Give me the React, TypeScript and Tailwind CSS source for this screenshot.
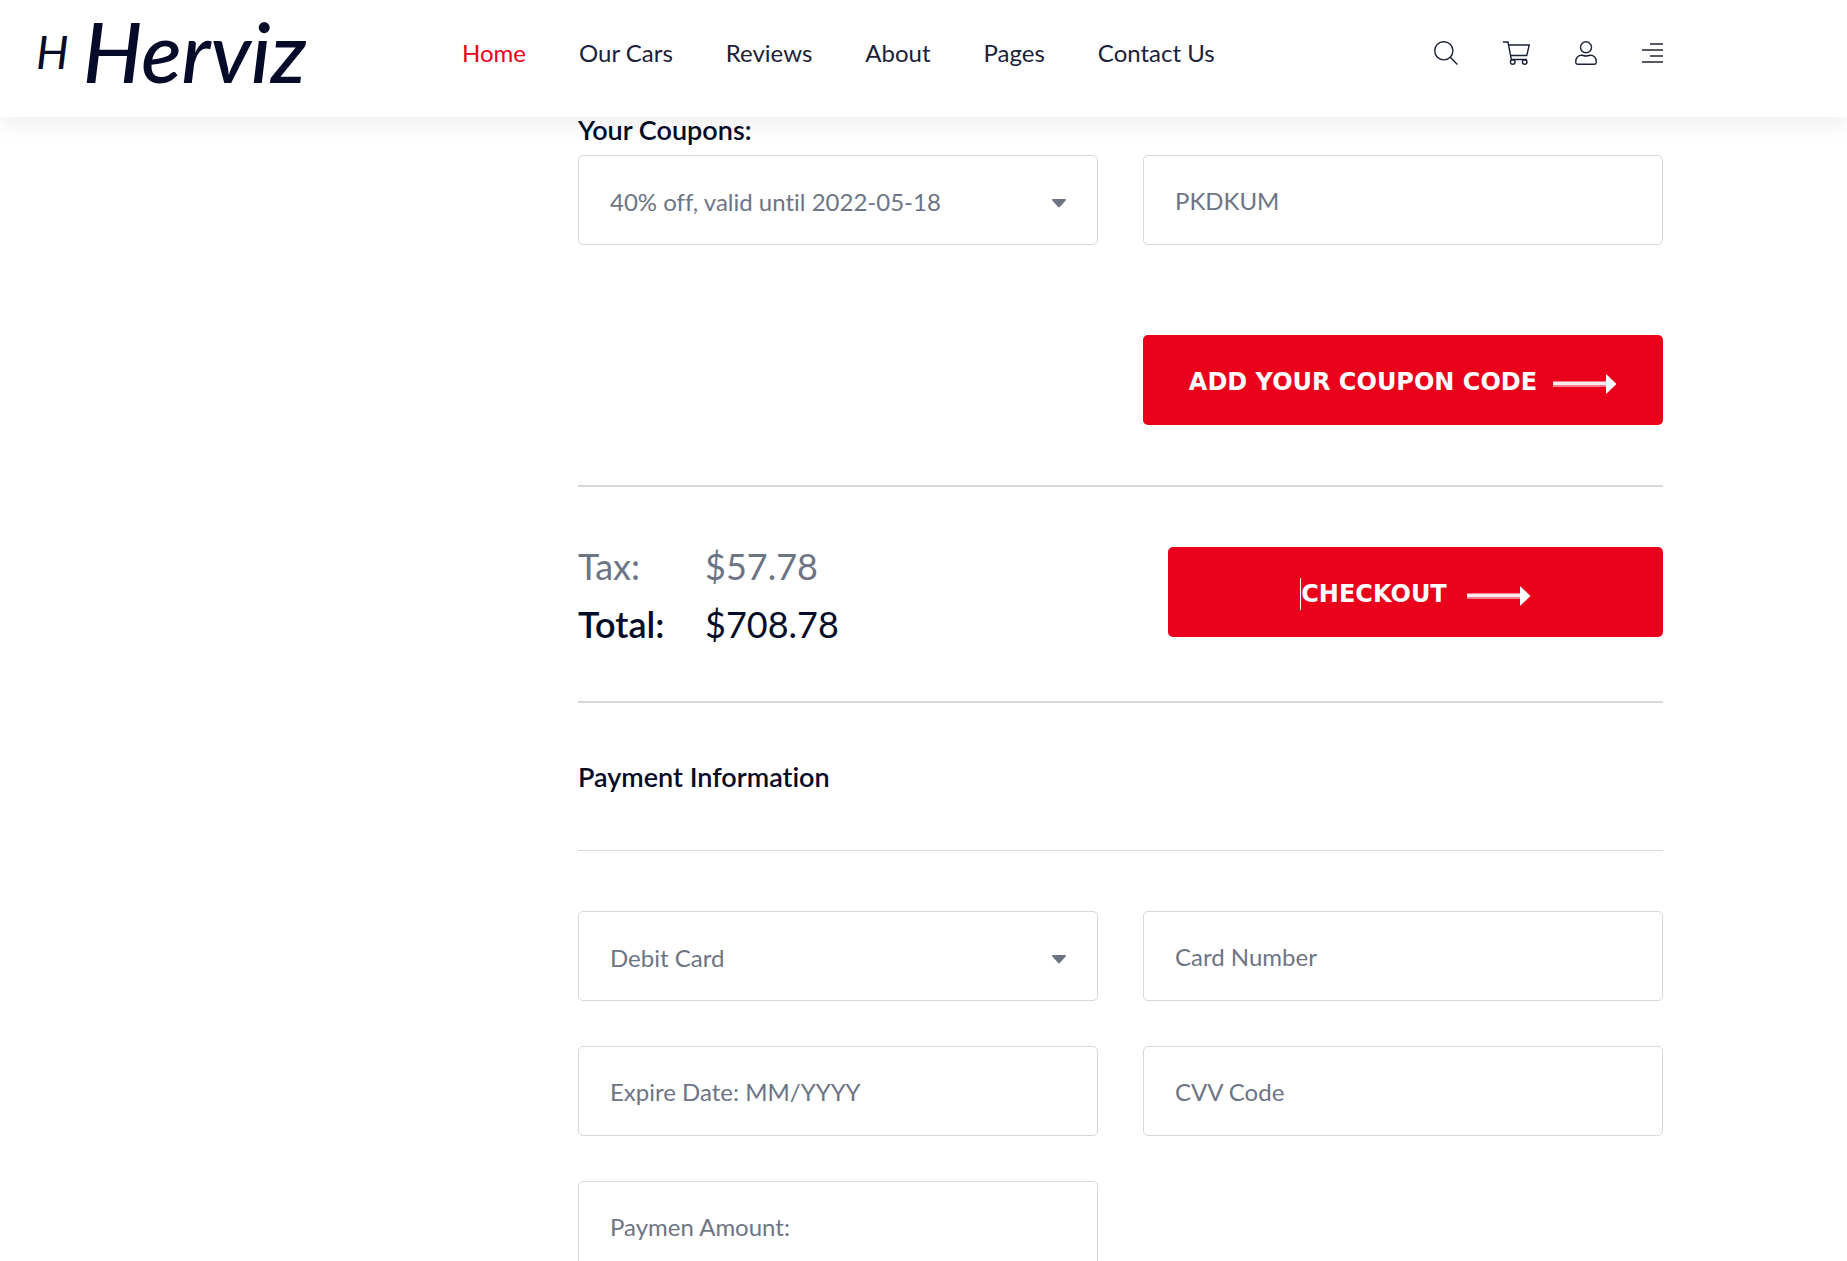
import type { ReactNode } from "react";

const NAV = ["Home", "Our Cars", "Reviews", "About", "Pages", "Contact Us"];

const FIELD =
  "block h-[90px] w-full rounded-[5px] border border-[#d8d8d8] bg-white px-[31px] text-2xl text-[#6d7585] outline-none placeholder:text-[#6d7585] placeholder:opacity-100";

function IconButton({ label, children }: { label: string; children: ReactNode }) {
  return (
    <button type="button" aria-label={label} className="flex items-center">
      {children}
    </button>
  );
}

function Icons() {
  return (
    <div className="flex items-center gap-[45px] text-[#1b2238]">
      <IconButton label="Search">
        <svg width="24" height="24" viewBox="0 0 24 24" fill="none" stroke="currentColor" strokeWidth="1.4">
          <circle cx="9.8" cy="9.8" r="9.1" />
          <path d="M16.3 16.3L23.4 23.4" />
        </svg>
      </IconButton>
      <IconButton label="Cart">
        <svg width="27" height="24" viewBox="0 0 27 24" fill="none" stroke="currentColor" strokeWidth="1.4">
          <path d="M0 1H5L8.3 18.5H24" />
          <path d="M5.6 4H26.2L23.8 14.5H7.6" />
          <circle cx="9.7" cy="21" r="2.3" />
          <circle cx="21.7" cy="21" r="2.3" />
        </svg>
      </IconButton>
      <IconButton label="Account">
        <svg width="22" height="24" viewBox="0 0 22 24" fill="none" stroke="currentColor" strokeWidth="1.4">
          <circle cx="11" cy="6.3" r="5.5" />
          <path d="M6.6 14.2C8 14.2 8.8 15 11 15C13.2 15 14 14.2 15.4 14.2C18.8 14.2 21.2 16.8 21.2 20V21.6C21.2 22.6 20.5 23.3 19.5 23.3H2.5C1.5 23.3 0.8 22.6 0.8 21.6V20C0.8 16.8 3.2 14.2 6.6 14.2Z" />
        </svg>
      </IconButton>
      <IconButton label="Menu">
        <svg width="21" height="24" viewBox="0 0 21 24" fill="none" stroke="#5b5868" strokeWidth="2">
          <path d="M8 3H21M0 9H21M8 15H21M0 21H21" />
        </svg>
      </IconButton>
    </div>
  );
}

function Arrow() {
  return (
    <svg width="64" height="24" viewBox="0 0 64 24" aria-hidden="true">
      <rect x="0" y="11" width="54" height="6" fill="#fff" opacity="0.5" />
      <rect x="0" y="12" width="54" height="3" fill="#fff" opacity="0.85" />
      <path d="M53 4L63.5 14L53 24Z" fill="#fff" />
    </svg>
  );
}

function SelectField({ label, value }: { label: string; value: string }) {
  return (
    <div className="relative">
      <select aria-label={label} className={`${FIELD} appearance-none pt-1`}>
        <option>{value}</option>
      </select>
      <svg className="pointer-events-none absolute top-11 right-8" width="14" height="9" viewBox="0 0 14 9" aria-hidden="true">
        <path d="M0.8 0H13.2C14 0 14.2 0.8 13.7 1.4L7.8 8C7.3 8.6 6.7 8.6 6.2 8L0.3 1.4C-0.2 0.8 0 0 0.8 0Z" fill="#6d7585" />
      </svg>
    </div>
  );
}

function TextField({ label }: { label: string }) {
  return <input type="text" aria-label={label} placeholder={label} className={FIELD} />;
}

const BUTTON =
  "flex h-[90px] items-center justify-center rounded-[5px] bg-[#eb001b] pt-1 font-['DejaVu_Sans',sans-serif] text-2xl font-bold whitespace-nowrap text-white";

export default function App() {
  return (
    <div className="h-screen overflow-hidden bg-white font-[Lato,sans-serif] text-[#030c26] [font-variant-ligatures:none]">
      <header className="relative z-10 flex h-[117px] items-start bg-white pr-[184px] pl-9 shadow-[0_10px_20px_rgba(0,0,0,0.06)]">
        <a href="#" aria-label="Herviz" className="flex h-[102px] w-[426px] items-center gap-3.5 text-[#060b29] italic">
          <span className="text-[46px]">H</span>
          <span className="text-[84px] leading-[102px] font-medium">Herviz</span>
        </a>
        <nav className="flex h-[106px] flex-1 items-center gap-[53px] text-2xl whitespace-nowrap text-[#1b2238]">
          {NAV.map((item) => (
            <a key={item} href="#" className={item === "Home" ? "text-[#eb001b]" : ""}>
              {item}
            </a>
          ))}
        </nav>
        <div className="flex h-[106px] items-center">
          <Icons />
        </div>
      </header>

      <main className="pr-[184px] pl-[578px]">
        <h2 className="mb-3 text-[27px] leading-[26px] font-semibold">Your Coupons:</h2>
        <div className="grid grid-cols-2 gap-x-[45px]">
          <SelectField label="Your coupons" value="40% off, valid until 2022-05-18" />
          <TextField label="PKDKUM" />
          <button type="button" className={`${BUTTON} col-start-2 mt-[90px] gap-4`}>
            ADD YOUR COUPON CODE
            <Arrow />
          </button>
        </div>

        <hr className="mt-[60px] border-t-2 border-[#d8d8d8]" />

        <section className="flex items-center justify-between pt-11 pb-12">
          <dl className="grid grid-cols-[127px_auto] pt-1.5 text-4xl leading-[58px]">
            <dt className="text-[#6d7585]">Tax:</dt>
            <dd className="text-[#6d7585]">$57.78</dd>
            <dt className="font-semibold">Total:</dt>
            <dd>$708.78</dd>
          </dl>
          <button type="button" className={`${BUTTON} w-[495px] gap-5`}>
            <span className="border-l border-white">CHECKOUT</span>
            <Arrow />
          </button>
        </section>

        <hr className="border-t-2 border-[#d8d8d8]" />
        <h2 className="py-[60px] text-[27px] leading-[27px] font-semibold">Payment Information</h2>
        <hr className="border-[#d8d8d8]" />

        <form className="mt-[60px] grid grid-cols-2 gap-[45px]">
          <SelectField label="Card type" value="Debit Card" />
          <TextField label="Card Number" />
          <TextField label="Expire Date: MM/YYYY" />
          <TextField label="CVV Code" />
          <TextField label="Paymen Amount:" />
        </form>
      </main>
    </div>
  );
}
